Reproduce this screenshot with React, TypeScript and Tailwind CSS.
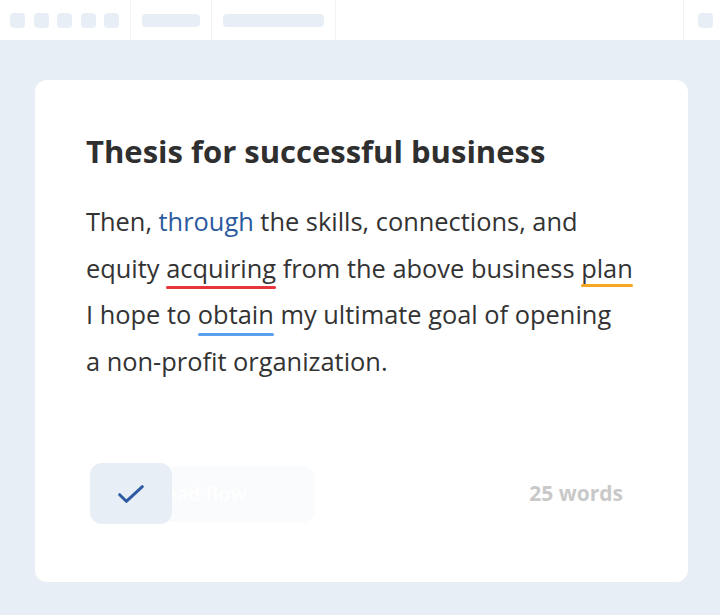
import React from 'react';

const Toolbar: React.FC = () => {
  return (
    <div className="flex h-10 bg-white">
      <div className="flex items-center gap-[8.5px] pl-[10px] pr-[11px] border-r border-[#f0f3f7]">
        {[0, 1, 2, 3, 4].map((i) => (
          <div key={i} className="w-[15px] h-[15px] rounded-[4px] bg-[#e8eef6]" />
        ))}
      </div>
      <div className="flex items-center px-[11px] border-r border-[#f0f3f7]">
        <div className="w-[58px] h-[13px] rounded-[4px] bg-[#e8eef6]" />
      </div>
      <div className="flex items-center px-[11px] border-r border-[#f0f3f7]">
        <div className="w-[101px] h-[13px] rounded-[4px] bg-[#e8eef6]" />
      </div>
      <div className="flex-1 border-r border-[#f0f3f7]" />
      <div className="flex items-center pl-[14px] pr-[7px]">
        <div className="w-[15px] h-[15px] rounded-[4px] bg-[#e8eef6]" />
      </div>
    </div>
  );
};

const Mark: React.FC<{ line: string; children: React.ReactNode }> = ({ line, children }) => (
  <span className="relative inline-block align-top">
    {children}
    <span className={`absolute left-0 right-0 h-[3px] rounded-full ${line}`} />
  </span>
);

export default function App() {
  return (
    <div className="w-[720px] h-[615px] bg-[#e8eef6] flex flex-col font-['Open_Sans','Noto_Sans',sans-serif]">
      <Toolbar />
      <div className="flex-1 pt-10 pl-[35px] pr-[32px] pb-[33px]">
        <div className="h-full bg-white rounded-xl pl-[51px] pr-[30px] pt-[52px] flex flex-col">
          <h1 className="text-[31px] leading-[38px] font-bold text-[#2f2f2f] whitespace-nowrap">
            Thesis for successful business
          </h1>
          <p className="mt-[28px] text-[25.4px] leading-[46.5px] text-[#333333] whitespace-nowrap">
            Then, <span className="text-[#2c5aa0]">through</span> the skills, connections, and
            <br />
            equity <Mark line="bottom-[2px] bg-[#e8343b]">acquiring</Mark> from the above business{' '}
            <Mark line="bottom-[4px] bg-[#f5a623]">plan</Mark>
            <br />
            I hope to <Mark line="bottom-[2px] bg-[#5aa0f0]">obtain</Mark> my ultimate goal of opening
            <br />
            a non-profit organization.
          </p>
          <div className="mt-auto mb-[58px] flex items-center">
            <div className="relative w-[225px] h-[61px] ml-[4px]">
              <div className="absolute left-0 top-[3px] w-[225px] h-[56px] rounded-xl bg-[#fafbfd] flex items-center pl-[62px]">
                <span className="text-[20px] font-semibold text-white">Read flow</span>
              </div>
              <div className="absolute left-0 top-0 w-[82px] h-[61px] rounded-xl bg-[#e8eef6] flex items-center justify-center">
                <svg width="32" height="32" viewBox="0 0 24 24" fill="none" stroke="#2c5aa0" strokeWidth="2.2" strokeLinecap="round" strokeLinejoin="round">
                  <path d="M3.5 12.5l5 5L20.5 6.5" />
                </svg>
              </div>
            </div>
            <span className="ml-auto mr-[35px] text-[21px] font-bold text-[#c9c9c9]">25 words</span>
          </div>
        </div>
      </div>
    </div>
  );
}
